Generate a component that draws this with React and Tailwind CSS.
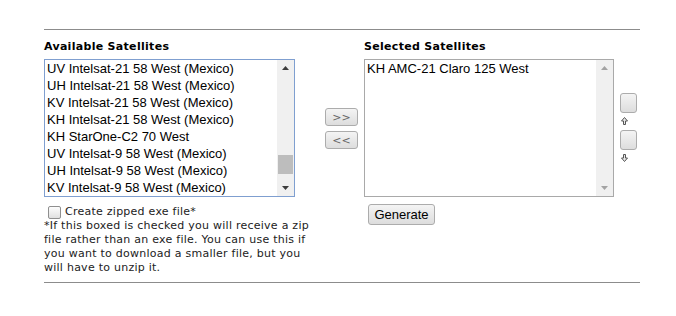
import React from 'react';

const available = [
  'UV Intelsat-21 58 West (Mexico)',
  'UH Intelsat-21 58 West (Mexico)',
  'KV Intelsat-21 58 West (Mexico)',
  'KH Intelsat-21 58 West (Mexico)',
  'KH StarOne-C2 70 West',
  'UV Intelsat-9 58 West (Mexico)',
  'UH Intelsat-9 58 West (Mexico)',
  'KV Intelsat-9 58 West (Mexico)',
];

const selected = ['KH AMC-21 Claro 125 West'];

const Arrow = ({ up, color }) => (
  <svg width="7" height="4" viewBox="0 0 7 4">
    <polygon points={up ? '0,4 3.5,0 7,4' : '0,0 7,0 3.5,4'} fill={color} />
  </svg>
);

const Scrollbar = ({ disabled, thumb }) => (
  <div className="w-[17px] h-full bg-[#f0f0f0] flex flex-col items-center justify-between py-[6px] relative">
    <Arrow up color={disabled ? '#a3a3a3' : '#3c3c3c'} />
    {thumb && (
      <div className="absolute left-[1px] right-[1px] top-[95px] h-[19px] bg-[#bdbdbd]" />
    )}
    <Arrow color={disabled ? '#a3a3a3' : '#3c3c3c'} />
  </div>
);

const ListBox = ({ items, focused, thumb, disabled }) => (
  <div
    className={
      'flex h-[138px] border bg-white ' +
      (focused ? 'border-[#7f9fd0]' : 'border-[#a9a9a9]')
    }
  >
    <div className="flex-1 overflow-hidden pl-[2px] text-[13px] leading-[17px] text-black font-['Liberation_Sans',Arial,sans-serif]">
      {items.map((s) => (
        <div key={s} className="whitespace-nowrap">{s}</div>
      ))}
    </div>
    <Scrollbar disabled={disabled} thumb={thumb} />
  </div>
);

const MoveArrow = ({ up }) => (
  <svg width="7" height="8" viewBox="0 0 7 8" className="ml-[1px] mt-[4px]">
    <path
      d={up ? 'M3.5 0.5 L6.5 4 L4.5 4 L4.5 7.5 L2.5 7.5 L2.5 4 L0.5 4 Z' : 'M3.5 7.5 L6.5 4 L4.5 4 L4.5 0.5 L2.5 0.5 L2.5 4 L0.5 4 Z'}
      fill="#e8e8e8"
      stroke="#555"
      strokeWidth="1"
    />
  </svg>
);

const btn =
  'border border-[#acacac] rounded-[3px] bg-gradient-to-b from-[#f4f4f4] to-[#dddddd]';

export default function App() {
  return (
    <div className="w-[676px] h-[316px] bg-white font-['DejaVu_Sans',Verdana,sans-serif] text-[#222]">
      <div className="ml-[44px] w-[596px] pt-[29px]">
        <div className="border-t border-[#8c8c8c]" />
        <div className="flex pt-[10px]">
          <div className="w-[251px]">
            <div className="text-[11px] font-bold leading-[14px] h-[19px] tracking-[0.3px] text-black">Available Satellites</div>
            <ListBox items={available} focused thumb />
            <label className="flex items-center mt-[8px] ml-[4px] text-[11px] leading-[14px] tracking-[0.25px]">
              <span className="w-[13px] h-[13px] border border-[#8f8f8f] rounded-[2px] bg-gradient-to-b from-[#fdfdfd] to-[#e0e0e0] mr-[4px]" />
              Create zipped exe file*
            </label>
            <p className="w-[272px] text-[11px] leading-[14px] tracking-[0.25px]">
              *If this boxed is checked you will receive a zip file rather than an exe file. You can use this if you want to download a smaller file, but you will have to unzip it.
            </p>
          </div>
          <div className="w-[69px] flex flex-col items-center pt-[68px] pl-[24px] gap-[5px]">
            <button className={btn + ' w-[33px] h-[18px] text-[11px] leading-none text-[#666]'}>&gt;&gt;</button>
            <button className={btn + ' w-[33px] h-[18px] text-[11px] leading-none text-[#666]'}>&lt;&lt;</button>
          </div>
          <div className="flex">
            <div className="w-[250px]">
              <div className="text-[11px] font-bold leading-[14px] h-[19px] tracking-[0.3px] text-black">Selected Satellites</div>
              <ListBox items={selected} disabled />
              <button className={btn + " mt-[7px] ml-[4px] w-[67px] h-[21px] text-[13px] text-black font-['Liberation_Sans',Arial,sans-serif]"}>
                Generate
              </button>
            </div>
            <div className="flex flex-col pl-[6px] pt-[53px]">
              <button className={btn + ' w-[17px] h-[20px]'} />
              <MoveArrow up />
              <button className={btn + ' w-[17px] h-[20px] mt-[5px]'} />
              <MoveArrow />
            </div>
          </div>
        </div>
        <div className="border-t border-[#8c8c8c] mt-[7px]" />
      </div>
    </div>
  );
}
